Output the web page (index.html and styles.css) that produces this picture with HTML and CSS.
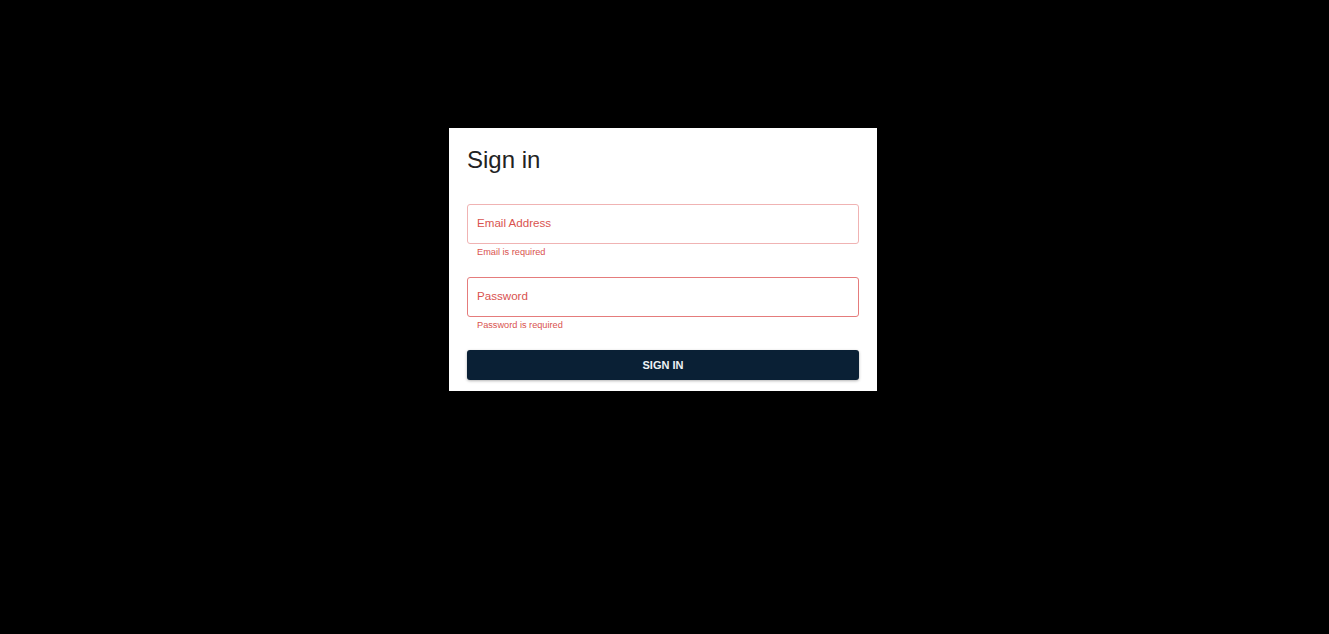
FILE: index.html
```html
<!DOCTYPE html>
<html>
<head>
<meta charset="utf-8">
<link rel="stylesheet" href="styles.css">
</head>
<body>
<div class="card">
  <h1 class="title">Sign in</h1>
  <div class="field">
    <div class="input input-light">Email Address</div>
    <div class="helper">Email is required</div>
  </div>
  <div class="field">
    <div class="input input-strong">Password</div>
    <div class="helper">Password is required</div>
  </div>
  <button class="btn">SIGN IN</button>
</div>
</body>
</html>
```

FILE: styles.css
```css
html, body {
  margin: 0;
  padding: 0;
  background: #000;
  font-family: "Liberation Sans", Arial, sans-serif;
}
.card {
  width: 392px;
  margin: 128px auto 0;
  padding: 18px 18px 11px;
  background: #fff;
  position: relative;
  left: -1.5px;
}
.title {
  margin: 0 0 30px;
  font-size: 24px;
  line-height: 28px;
  font-weight: 400;
  color: #222;
}
.field {
  margin-bottom: 19px;
}
.input {
  box-sizing: border-box;
  height: 40px;
  border: 1px solid #e57373;
  border-radius: 3px;
  padding: 0 9px 3px;
  display: flex;
  align-items: center;
  font-size: 11.6px;
  color: #d9534f;
}
.input-light {
  border-color: #f0b3b3;
}
.input-strong {
  border-color: #e57c7c;
}
.helper {
  margin: 2px 0 0 10px;
  font-size: 9.2px;
  line-height: 12px;
  color: #d9534f;
}
.btn {
  display: block;
  width: 100%;
  height: 30px;
  border: 0;
  border-radius: 3px;
  background: #0a2035;
  color: #eef2f5;
  font-family: "Liberation Sans", Arial, sans-serif;
  font-size: 11px;
  font-weight: 700;
  box-shadow: 0 1px 3px rgba(0,0,0,0.3);
  padding: 0;
}
```
